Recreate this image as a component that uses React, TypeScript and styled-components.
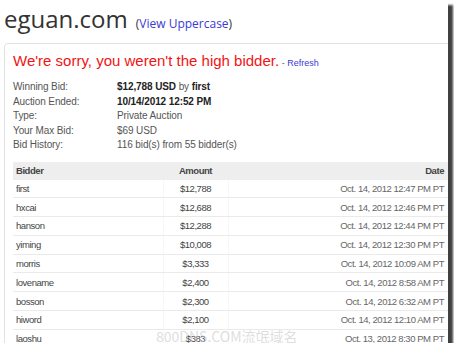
import React from 'react';
import styled, { createGlobalStyle } from 'styled-components';

interface Bid {
  bidder: string;
  amount: string;
  date: string;
}

const bids: Bid[] = [
  { bidder: 'first', amount: '$12,788', date: 'Oct. 14, 2012 12:47 PM PT' },
  { bidder: 'hxcai', amount: '$12,688', date: 'Oct. 14, 2012 12:46 PM PT' },
  { bidder: 'hanson', amount: '$12,288', date: 'Oct. 14, 2012 12:44 PM PT' },
  { bidder: 'yiming', amount: '$10,008', date: 'Oct. 14, 2012 12:30 PM PT' },
  { bidder: 'morris', amount: '$3,333', date: 'Oct. 14, 2012 10:09 AM PT' },
  { bidder: 'lovename', amount: '$2,400', date: 'Oct. 14, 2012 8:58 AM PT' },
  { bidder: 'bosson', amount: '$2,300', date: 'Oct. 14, 2012 6:32 AM PT' },
  { bidder: 'hiword', amount: '$2,100', date: 'Oct. 14, 2012 12:10 AM PT' },
  { bidder: 'laoshu', amount: '$383', date: 'Oct. 13, 2012 8:30 PM PT' },
];

const App: React.FC = () => {
  return (
    <>
      <GlobalStyle />
      <Frame>
        <TitleRow>
          <Domain>eguan.com</Domain>
          <TitleAside>
            (<BlueLink>View Uppercase</BlueLink>)
          </TitleAside>
        </TitleRow>
        <Panel>
          <Notice>
            We're sorry, you weren't the high bidder.
            <RefreshNote>
              {' '}- <BlueLink>Refresh</BlueLink>
            </RefreshNote>
          </Notice>
          <Details>
            <Label>Winning Bid:</Label>
            <Value>
              <b>$12,788 USD</b> by <b>first</b>
            </Value>
            <Label>Auction Ended:</Label>
            <Value>
              <b>10/14/2012 12:52 PM</b>
            </Value>
            <Label>Type:</Label>
            <Value>Private Auction</Value>
            <Label>Your Max Bid:</Label>
            <Value>$69 USD</Value>
            <Label>Bid History:</Label>
            <Value>116 bid(s) from 55 bidder(s)</Value>
          </Details>
          <BidTable>
            <HeadRow>
              <Cell>Bidder</Cell>
              <Cell $align="center">Amount</Cell>
              <Cell $align="right">Date</Cell>
            </HeadRow>
            {bids.map((bid) => (
              <BidRow key={bid.bidder}>
                <Cell>{bid.bidder}</Cell>
                <Cell $align="center" $divided>
                  {bid.amount}
                </Cell>
                <Cell $align="right" $muted>
                  {bid.date}
                </Cell>
              </BidRow>
            ))}
          </BidTable>
        </Panel>
        <Watermark>800DNS.COM流氓域名</Watermark>
      </Frame>
    </>
  );
};

export default App;

const GlobalStyle = createGlobalStyle`
  body {
    margin: 0;
    background: #fff;
    font-family: "Liberation Sans", Arial, sans-serif;
  }
`;

const Frame = styled.div`
  position: relative;
  width: 448px;
  height: 343px;
  overflow: hidden;
  background: #fff;
  box-shadow: 5px 5px 2px rgba(0, 0, 0, 0.75);
`;

const TitleRow = styled.div`
  display: flex;
  align-items: baseline;
  gap: 8px;
  padding: 4px 0 0 4px;
  height: 43px;
  box-sizing: border-box;
`;

const Domain = styled.span`
  font-family: "Open Sans", sans-serif;
  font-size: 24px;
  line-height: 30px;
  color: #333;
`;

const TitleAside = styled.span`
  font-family: "Open Sans", sans-serif;
  font-size: 12px;
  color: #333;
`;

const BlueLink = styled.span`
  color: #3a3ad6;
`;

const Panel = styled.div`
  margin-left: 4px;
  width: 453px;
  border: 1px solid #e2e2e2;
  border-radius: 4px;
  padding: 8px 8px 0 8px;
  box-sizing: border-box;
`;

const Notice = styled.div`
  font-size: 15px;
  color: #f01414;
  line-height: 18px;
  margin-bottom: 8px;
`;

const RefreshNote = styled.span`
  font-size: 9px;
  color: #666;
`;

const Details = styled.div`
  display: grid;
  grid-template-columns: 104px 1fr;
  grid-auto-rows: 14.5px;
  font-size: 10px;
  letter-spacing: -0.1px;
  line-height: 14.5px;
  margin-bottom: 9px;
`;

const Label = styled.div`
  color: #555;
`;

const Value = styled.div`
  color: #555;

  b {
    color: #222;
  }
`;

const BidTable = styled.div`
  display: flex;
  flex-direction: column;
  font-size: 9.5px;
  letter-spacing: -0.45px;
`;

const HeadRow = styled.div`
  display: grid;
  grid-template-columns: 150px 66px 1fr;
  height: 18px;
  background: #eeeeee;
  font-weight: bold;
  color: #444;
`;

const BidRow = styled.div`
  display: grid;
  grid-template-columns: 150px 66px 1fr;
  height: 18.8px;
  border-bottom: 1px solid #eaeaea;
  box-sizing: border-box;
  color: #444;
`;

const Cell = styled.div<{ $align?: 'left' | 'center' | 'right'; $divided?: boolean; $muted?: boolean }>`
  display: flex;
  align-items: center;
  justify-content: ${(p) =>
    p.$align === 'center' ? 'center' : p.$align === 'right' ? 'flex-end' : 'flex-start'};
  padding: 0 4px 0 3px;
  white-space: nowrap;
  color: ${(p) => (p.$muted ? '#666' : 'inherit')};
  border-left: ${(p) => (p.$divided ? '1px solid #f7f7f7' : 'none')};
  border-right: ${(p) => (p.$divided ? '1px solid #f7f7f7' : 'none')};
`;

const Watermark = styled.div`
  position: absolute;
  left: 156px;
  top: 327px;
  font-family: "Noto Sans CJK SC", "Liberation Sans", sans-serif;
  font-size: 14px;
  line-height: 18px;
  color: rgba(200, 200, 200, 0.6);
  pointer-events: none;
`;
